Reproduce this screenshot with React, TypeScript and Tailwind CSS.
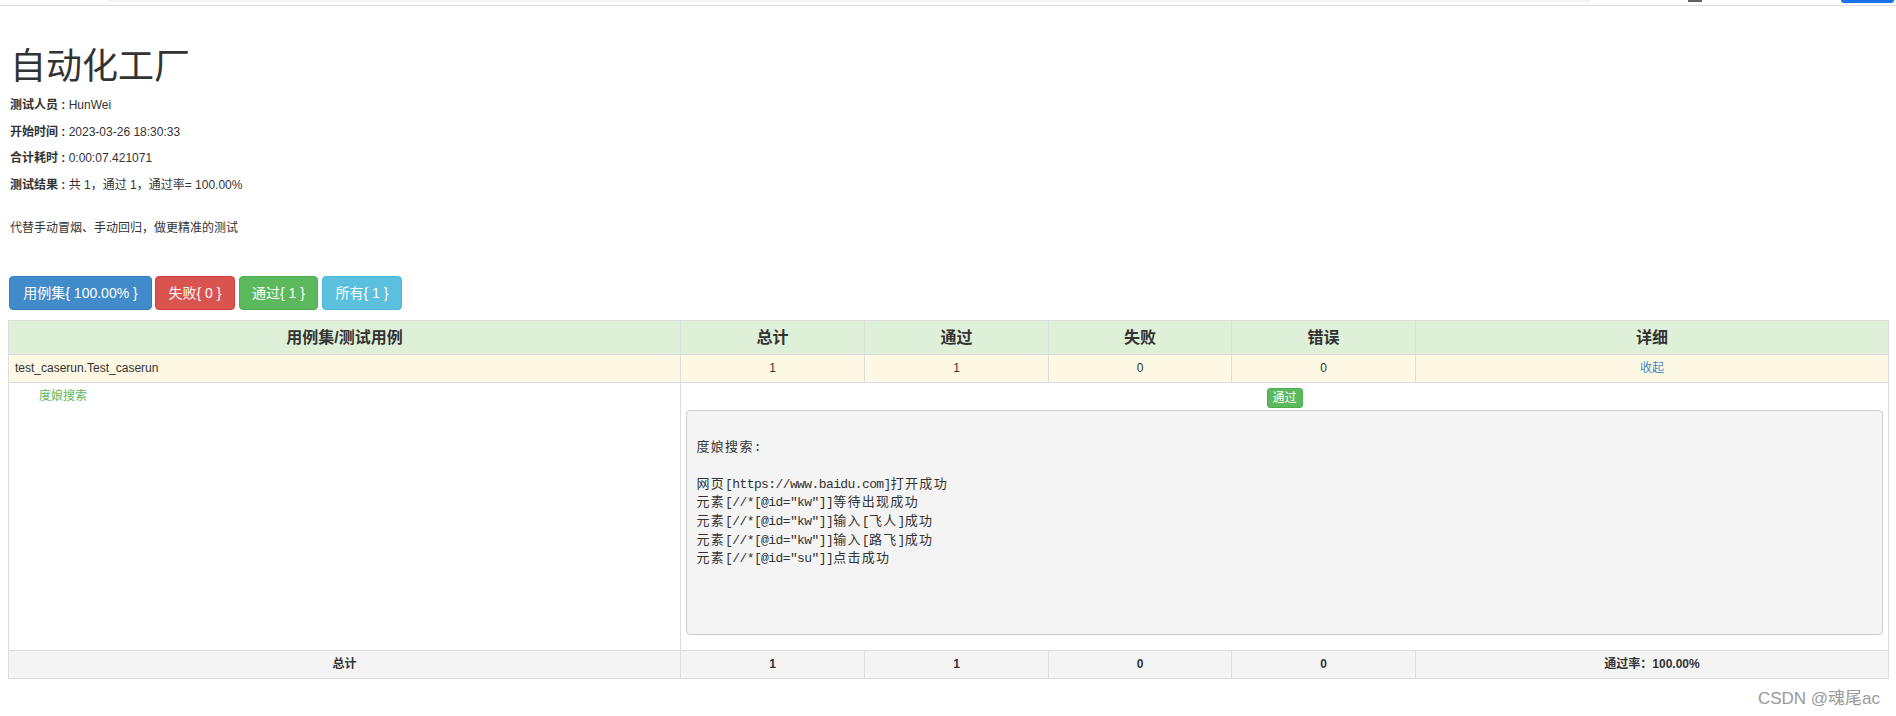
import React from "react";

const sans = { fontFamily: '"Liberation Sans", "Noto Sans CJK SC", sans-serif' };

function Cjk({ children }: { children: React.ReactNode }) {
  return <span className="tracking-[1.3px]">{children}</span>;
}

export default function App() {
  const cols = [672, 184, 184, 183, 184, 473];
  return (
    <div className="relative w-[1896px] h-[716px] bg-white text-[#333] font-['Liberation_Sans','Noto_Sans_CJK_SC',sans-serif]">
      {/* browser chrome remnant */}
      <div className="relative h-[6px] border-b border-[#dadce0]">
        <div className="absolute left-[107px] top-0 w-[1484px] h-[2px] bg-[#f1f3f4] rounded-b" />
        <div className="absolute left-[1688px] top-0 w-[14px] h-[2px] bg-[#5f6368]" />
        <div className="absolute left-[1841px] top-0 w-[53px] h-[3px] bg-[#1a73e8] rounded-b-full" />
      </div>

      <div className="px-[10px]">
        <h1 className="mt-[41px] mb-[10px] text-[36px] leading-[40px] font-normal text-[#333]">自动化工厂</h1>
        <p className="text-[12px] leading-[16.67px] mb-[10px]"><strong>测试人员 : </strong>HunWei</p>
        <p className="text-[12px] leading-[16.67px] mb-[10px]"><strong>开始时间 : </strong>2023-03-26 18:30:33</p>
        <p className="text-[12px] leading-[16.67px] mb-[10px]"><strong>合计耗时 : </strong>0:00:07.421071</p>
        <p className="text-[12px] leading-[16.67px]"><strong>测试结果 : </strong>共 1，通过 1，通过率= 100.00%</p>
        <p className="mt-[26px] text-[12px] leading-[17px]">代替手动冒烟、手动回归，做更精准的测试</p>
      </div>

      <div className="mt-[39px] ml-[9px] flex text-[14px] leading-[20px] text-white">
        <button className="h-[34px] w-[143px] rounded-[4px] border border-[#357ebd] bg-[#428bca]">用例集{"{"} 100.00% {"}"}</button>
        <button className="ml-[3px] h-[34px] w-[80px] rounded-[4px] border border-[#d43f3a] bg-[#d9534f]">失败{"{"} 0 {"}"}</button>
        <button className="ml-[4px] h-[34px] w-[79px] rounded-[4px] border border-[#4cae4c] bg-[#5cb85c]">通过{"{"} 1 {"}"}</button>
        <button className="ml-[4px] h-[34px] w-[80px] rounded-[4px] border border-[#46b8da] bg-[#5bc0de]">所有{"{"} 1 {"}"}</button>
      </div>

      <table className="mt-[10px] ml-[8px] w-[1880px] table-fixed border-collapse border border-[#ddd] text-[12px] leading-[17px]">
        <colgroup>
          {cols.map((w, i) => (
            <col key={i} style={{ width: w }} />
          ))}
        </colgroup>
        <thead>
          <tr className="bg-[#dff0d8] text-[16px] leading-[23px] font-bold">
            <th className="border border-[#ddd] px-[5px] py-[5px] text-center">用例集/测试用例</th>
            <th className="border border-[#ddd] px-[5px] py-[5px] text-center">总计</th>
            <th className="border border-[#ddd] px-[5px] py-[5px] text-center">通过</th>
            <th className="border border-[#ddd] px-[5px] py-[5px] text-center">失败</th>
            <th className="border border-[#ddd] px-[5px] py-[5px] text-center">错误</th>
            <th className="border border-[#ddd] px-[5px] py-[5px] text-center">详细</th>
          </tr>
        </thead>
        <tbody>
          <tr className="bg-[#fcf8e3]">
            <td className="border border-[#ddd] px-[6px] py-[5px] text-left">test_caserun.Test_caserun</td>
            <td className="border border-[#ddd] px-[5px] py-[5px] text-center">1</td>
            <td className="border border-[#ddd] px-[5px] py-[5px] text-center">1</td>
            <td className="border border-[#ddd] px-[5px] py-[5px] text-center">0</td>
            <td className="border border-[#ddd] px-[5px] py-[5px] text-center">0</td>
            <td className="border border-[#ddd] px-[5px] py-[5px] text-center text-[#428bca]">收起</td>
          </tr>
          <tr>
            <td className="border border-[#ddd] px-[5px] py-[5px] align-top">
              <div className="ml-[25px] text-[#5cb85c]">度娘搜索</div>
            </td>
            <td colSpan={5} className="border border-[#ddd] px-[5px] pt-[5px] pb-[15px] align-top">
              <div className="flex justify-center">
                <span className="h-[20px] w-[36px] rounded-[3px] border border-[#4cae4c] bg-[#5cb85c] text-white text-[12px] leading-[18px] text-center">通过</span>
              </div>
              <pre className="mt-[2px] rounded-[4px] border border-[#ccc] bg-[#f4f4f4] px-[9.5px] py-[9.5px] text-[13px] leading-[18.57px] tracking-[-0.6px] text-[#333] font-['Liberation_Mono','Noto_Sans_CJK_SC',monospace] whitespace-pre">
                {"\n"}
                <Cjk>度娘搜索</Cjk>:{"\n"}
                {"\n"}
                <Cjk>网页</Cjk>[https://www.baidu.com]<Cjk>打开成功</Cjk>{"\n"}
                <Cjk>元素</Cjk>[//*[@id="kw"]]<Cjk>等待出现成功</Cjk>{"\n"}
                <Cjk>元素</Cjk>[//*[@id="kw"]]<Cjk>输入</Cjk>[<Cjk>飞人</Cjk>]<Cjk>成功</Cjk>{"\n"}
                <Cjk>元素</Cjk>[//*[@id="kw"]]<Cjk>输入</Cjk>[<Cjk>路飞</Cjk>]<Cjk>成功</Cjk>{"\n"}
                <Cjk>元素</Cjk>[//*[@id="su"]]<Cjk>点击成功</Cjk>{"\n"}
                {"\n"}
                {"\n"}
                {" "}
              </pre>
            </td>
          </tr>
          <tr className="bg-[#f4f4f4] font-bold">
            <td className="border border-[#ddd] px-[5px] py-[5px] text-center">总计</td>
            <td className="border border-[#ddd] px-[5px] py-[5px] text-center">1</td>
            <td className="border border-[#ddd] px-[5px] py-[5px] text-center">1</td>
            <td className="border border-[#ddd] px-[5px] py-[5px] text-center">0</td>
            <td className="border border-[#ddd] px-[5px] py-[5px] text-center">0</td>
            <td className="border border-[#ddd] px-[5px] py-[5px] text-center">通过率：100.00%</td>
          </tr>
        </tbody>
      </table>

      <div className="absolute right-[16px] top-[688px] text-[17px] leading-[22px] text-[#999]" style={sans}>CSDN @魂尾ac</div>
    </div>
  );
}
